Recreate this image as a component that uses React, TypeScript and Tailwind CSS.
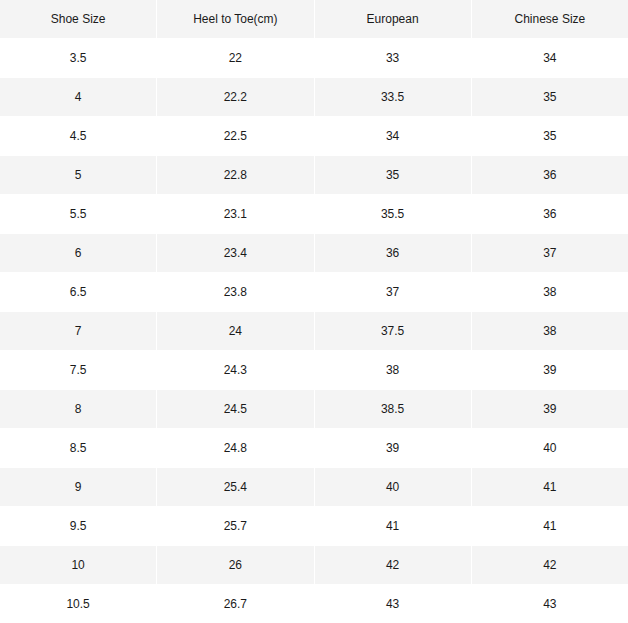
import React from "react";

const rows: [string, string, string, string][] = [
  ["3.5", "22", "33", "34"],
  ["4", "22.2", "33.5", "35"],
  ["4.5", "22.5", "34", "35"],
  ["5", "22.8", "35", "36"],
  ["5.5", "23.1", "35.5", "36"],
  ["6", "23.4", "36", "37"],
  ["6.5", "23.8", "37", "38"],
  ["7", "24", "37.5", "38"],
  ["7.5", "24.3", "38", "39"],
  ["8", "24.5", "38.5", "39"],
  ["8.5", "24.8", "39", "40"],
  ["9", "25.4", "40", "41"],
  ["9.5", "25.7", "41", "41"],
  ["10", "26", "42", "42"],
  ["10.5", "26.7", "43", "43"],
];

const headers = ["Shoe Size", "Heel to Toe(cm)", "European", "Chinese Size"];

export default function App() {
  return (
    <div
      className="w-[628px] h-[623px] bg-white text-[#1a1a1a] text-[12px] overflow-hidden"
      style={{ fontFamily: '"Liberation Sans", Arial, sans-serif' }}
    >
      <div className="grid grid-cols-4 gap-px bg-white">
        {headers.map((h) => (
          <div key={h} className="h-[38px] bg-[#f4f4f4] flex items-center justify-center">
            {h}
          </div>
        ))}
        {rows.map((r, i) =>
          r.map((c, j) => (
            <div
              key={`${i}-${j}`}
              className={
                i % 2 === 1
                  ? "h-[38px] bg-[#f4f4f4] flex items-center justify-center"
                  : "h-[38px] bg-white flex items-center justify-center"
              }
            >
              {c}
            </div>
          ))
        )}
      </div>
    </div>
  );
}
